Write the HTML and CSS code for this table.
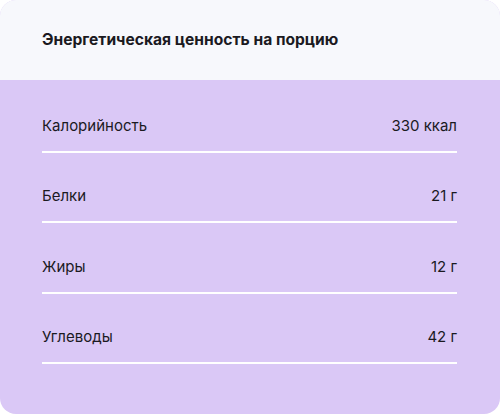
FILE: index.html
```html
<!DOCTYPE html>
<html lang="ru">
<head>
<meta charset="utf-8">
<link rel="stylesheet" href="styles.css">
</head>
<body>
<div class="card">
  <div class="card-header">
    <h2 class="title">Энергетическая ценность на порцию</h2>
  </div>
  <div class="card-body">
    <div class="row"><span class="label">Калорийность</span><span class="value">330 ккал</span></div>
    <div class="row"><span class="label">Белки</span><span class="value">21 г</span></div>
    <div class="row"><span class="label">Жиры</span><span class="value">12 г</span></div>
    <div class="row"><span class="label">Углеводы</span><span class="value">42 г</span></div>
  </div>
</div>
</body>
</html>
```
FILE: styles.css
```css
html, body {
  margin: 0;
  padding: 0;
  background: #ffffff;
}
body {
  font-family: Inter, "Noto Sans", sans-serif;
  color: #1b1a1f;
}
.card {
  width: 500px;
  height: 414px;
  border-radius: 16px;
  overflow: hidden;
  background: #dac8f6;
  display: flex;
  flex-direction: column;
}
.card-header {
  height: 80px;
  background: #f7f8fc;
  display: flex;
  align-items: center;
  padding: 0 42px;
  flex-shrink: 0;
}
.title {
  margin: 0;
  font-size: 15.6px;
  font-weight: 700;
  line-height: 20px;
}
.card-body {
  padding: 2px 43px 0 42px;
}
.row {
  display: flex;
  justify-content: space-between;
  align-items: center;
  padding: 33.5px 0 15px;
  line-height: 20px;
  font-size: 15px;
  border-bottom: 2px solid #ffffff;
}
```
